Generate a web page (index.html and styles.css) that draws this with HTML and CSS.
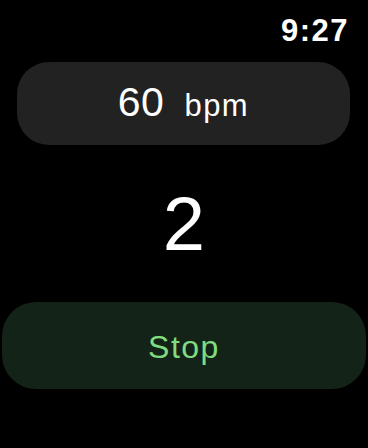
FILE: index.html
```html
<!DOCTYPE html>
<html lang="en">
<head>
  <meta charset="UTF-8" />
  <title>Metronome</title>
  <link rel="stylesheet" href="styles.css">
</head>
<body>

<div class="status">
  <span class="time">9:27</span>
</div>

<div class="tempo">
  <span class="bpm-value">60</span>
  <span class="bpm-unit">bpm</span>
</div>

<div class="beat">2</div>

<button class="stop-btn">Stop</button>

</body>
</html>
```

FILE: styles.css
```css
body {
  margin: 0;
  width: 368px;
  height: 448px;
  background: #000;
  color: #fff;
  font-family: "Liberation Sans", Arial, sans-serif;
  display: flex;
  flex-direction: column;
}
.status {
  height: 62px;
  display: flex;
  justify-content: flex-end;
  padding-right: 19px;
}
.time {
  font-size: 31px;
  font-weight: bold;
  margin-top: 13px;
  line-height: 36px;
  letter-spacing: 1.5px;
}
.tempo {
  margin: 0 18px 0 17px;
  height: 83px;
  border-radius: 32px;
  background: #222;
  display: flex;
  align-items: baseline;
  justify-content: center;
  gap: 20px;
  line-height: 80px;
}
.bpm-value {
  font-size: 41px;
  letter-spacing: 0.5px;
}
.bpm-unit {
  font-size: 31px;
  letter-spacing: 1.5px;
}
.beat {
  height: 157px;
  display: flex;
  align-items: center;
  justify-content: center;
  font-size: 76px;
}
.stop-btn {
  margin: 0 2px;
  height: 87px;
  padding-top: 4px;
  border: none;
  border-radius: 34px;
  background: #142317;
  color: #80dc80;
  font-family: "Liberation Sans", Arial, sans-serif;
  font-size: 32px;
  letter-spacing: 1.5px;
}
```
